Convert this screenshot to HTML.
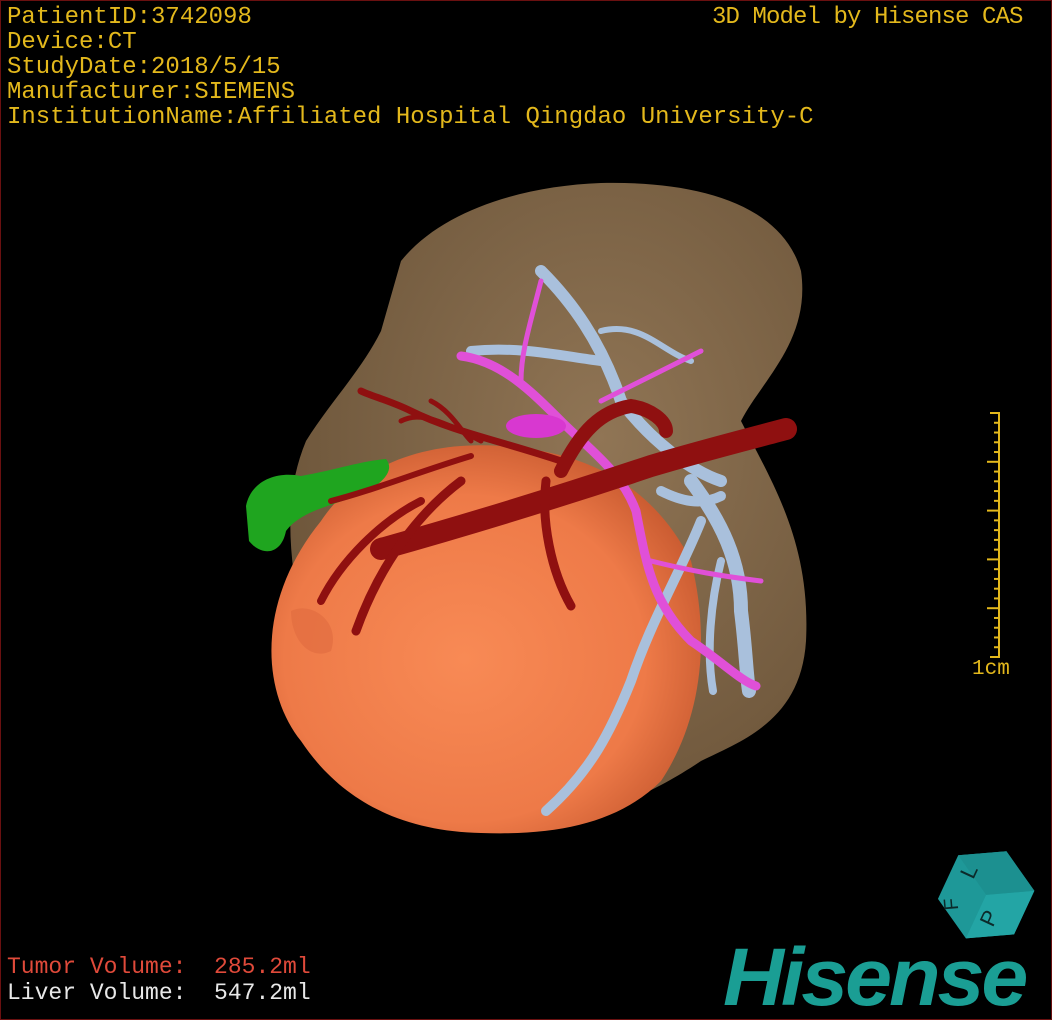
<!DOCTYPE html>
<html><head><meta charset="utf-8"><style>
html,body{margin:0;padding:0;background:#000;}
#f{position:relative;width:1052px;height:1020px;overflow:hidden;background:#000;box-sizing:border-box;border:1px solid #6a1010;}
.t{position:absolute;font-family:"Liberation Mono",monospace;font-size:24px;color:#e3b81c;white-space:pre;line-height:25px;}
svg{position:absolute;left:0;top:0}
</style></head><body><div id="f">
<svg width="1052" height="1020" viewBox="0 0 1052 1020">
<defs>
<radialGradient id="tg" cx="0.45" cy="0.55" r="0.6"><stop offset="0" stop-color="#f88a55"/><stop offset="0.7" stop-color="#ee7a48"/><stop offset="1" stop-color="#c85a30"/></radialGradient>
<radialGradient id="lg" cx="0.6" cy="0.4" r="0.7"><stop offset="0" stop-color="#907555"/><stop offset="1" stop-color="#6a5338"/></radialGradient>
</defs>
<path d="M400,260 C440,210 520,185 600,182 C690,180 780,200 800,270 C810,340 760,380 740,420 C770,480 810,540 805,640 C800,720 740,740 700,760 C640,800 600,810 560,820 L420,800 C340,770 300,700 300,620 C290,560 280,500 305,440 C330,400 360,370 380,330 Z" fill="url(#lg)"/>
<path d="M320,520 C360,460 430,440 500,445 C580,450 650,480 690,560 C710,640 700,720 660,780 C620,820 560,835 480,832 C400,830 340,800 300,740 C260,690 255,600 320,520 Z" fill="url(#tg)"/>
<path d="M290,610 C310,600 340,620 330,650 C310,660 290,640 290,610 Z" fill="#e06a40" opacity="0.6"/>
<path d="M245,505 C250,480 275,470 300,475 C330,470 360,460 385,458 C395,470 380,485 355,495 C330,505 300,510 285,530 C280,555 260,555 248,540 Z" fill="#1fa51f"/>
<g stroke="#a9c0dc" stroke-linecap="round" fill="none">
<path d="M540,270 C570,300 600,340 620,400 C650,440 690,470 720,480" stroke-width="12"/>
<path d="M470,350 C520,345 560,355 600,360" stroke-width="10"/>
<path d="M690,480 C720,520 740,560 740,610 C745,650 745,670 748,690" stroke-width="14"/>
<path d="M700,520 C680,570 650,620 630,680 C610,730 590,770 545,810" stroke-width="10"/>
<path d="M720,560 C710,600 705,650 712,690" stroke-width="8"/>
<path d="M660,490 C680,500 700,505 720,495" stroke-width="10"/>
<path d="M600,330 C640,320 660,350 690,360" stroke-width="6"/>
</g>
<g stroke="#e050d8" stroke-linecap="round" fill="none">
<path d="M460,355 C500,360 530,390 560,420 C590,450 620,470 635,510 C645,560 650,600 690,640 C720,660 740,680 755,685" stroke-width="9"/>
<path d="M540,280 C530,320 520,350 520,380" stroke-width="5"/>
<path d="M600,400 C640,380 680,360 700,350" stroke-width="5"/>
<path d="M650,560 C690,570 720,575 760,580" stroke-width="5"/>
</g>
<ellipse cx="535" cy="425" rx="30" ry="12" fill="#d838d0"/>
<g stroke="#8f1010" stroke-linecap="round" fill="none">
<path d="M380,548 C480,520 560,495 650,465 C700,450 740,440 785,428" stroke-width="22"/>
<path d="M560,470 C580,430 600,410 630,405 C650,408 665,420 665,430" stroke-width="14"/>
<path d="M420,500 C380,520 340,560 320,600" stroke-width="8"/>
<path d="M460,480 C420,510 380,560 355,630" stroke-width="9"/>
<path d="M545,480 C540,520 550,570 570,605" stroke-width="9"/>
<path d="M560,460 C500,440 450,430 410,410 C390,400 370,395 360,390" stroke-width="7"/>
<path d="M480,440 C440,420 420,410 400,420" stroke-width="5"/>
<path d="M330,500 C370,490 420,470 470,455" stroke-width="6"/>
<path d="M430,400 C450,410 460,430 470,440" stroke-width="5"/>
</g>
<g stroke="#e3b81c" stroke-width="2">
<line x1="998" y1="412" x2="998" y2="656"/>
<line x1="989" y1="412" x2="999" y2="412"/>
<line x1="989" y1="656" x2="999" y2="656"/>
</g>
<g stroke="#e3b81c" stroke-width="2" id="ticks"></g>
<g transform="translate(986,892) rotate(25)">
<polygon points="-42,-22 0,-46 42,-22 42,26 0,50 -42,26" fill="#1e9898"/>
<polygon points="0,2 42,-22 42,26 0,50" fill="#23a5a5"/>
<polygon points="-42,-22 0,-46 42,-22 0,2" fill="#1c9090"/>
<text x="-18" y="-12" font-family="Liberation Sans" font-size="22" fill="#0c2a2a" text-anchor="middle" transform="rotate(-90 -18 -12)">L</text>
<text x="20" y="22" font-family="Liberation Sans" font-size="22" fill="#0c2a2a" text-anchor="middle" transform="rotate(-90 20 22)">P</text>
<text x="-22" y="22" font-family="Liberation Sans" font-size="20" fill="#0c2a2a" text-anchor="middle" transform="rotate(-120 -22 22)">F</text>
</g>
</svg>
<div class="t" style="left:6px;top:4px">PatientID:3742098
Device:CT
StudyDate:2018/5/15
Manufacturer:SIEMENS
InstitutionName:Affiliated Hospital Qingdao University-C</div>
<div class="t" style="left:711px;top:4px;letter-spacing:-0.9px">3D Model by Hisense CAS</div>
<div class="t" style="left:971px;top:656px;font-size:21px">1cm</div>
<div class="t" style="left:6px;top:954px;font-size:23px;color:#e04a3a">Tumor Volume:  285.2ml</div>
<div class="t" style="left:6px;top:980px;font-size:23px;color:#e8e8e8">Liver Volume:  547.2ml</div>
<div style="position:absolute;left:722px;top:934px;font-family:'Liberation Sans',sans-serif;font-weight:bold;font-style:italic;font-size:82px;color:#1a9e94;letter-spacing:-3px;line-height:86px;transform:scaleX(1.03);transform-origin:left top">Hisense</div>
</div>
<script>
var g=document.getElementById('ticks');
for(var i=1;i<25;i++){var y=412+i*244/25;var l=document.createElementNS('http://www.w3.org/2000/svg','line');l.setAttribute('x1',i%5==0?986:993);l.setAttribute('x2',999);l.setAttribute('y1',y);l.setAttribute('y2',y);g.appendChild(l);}
</script>
</body></html>
